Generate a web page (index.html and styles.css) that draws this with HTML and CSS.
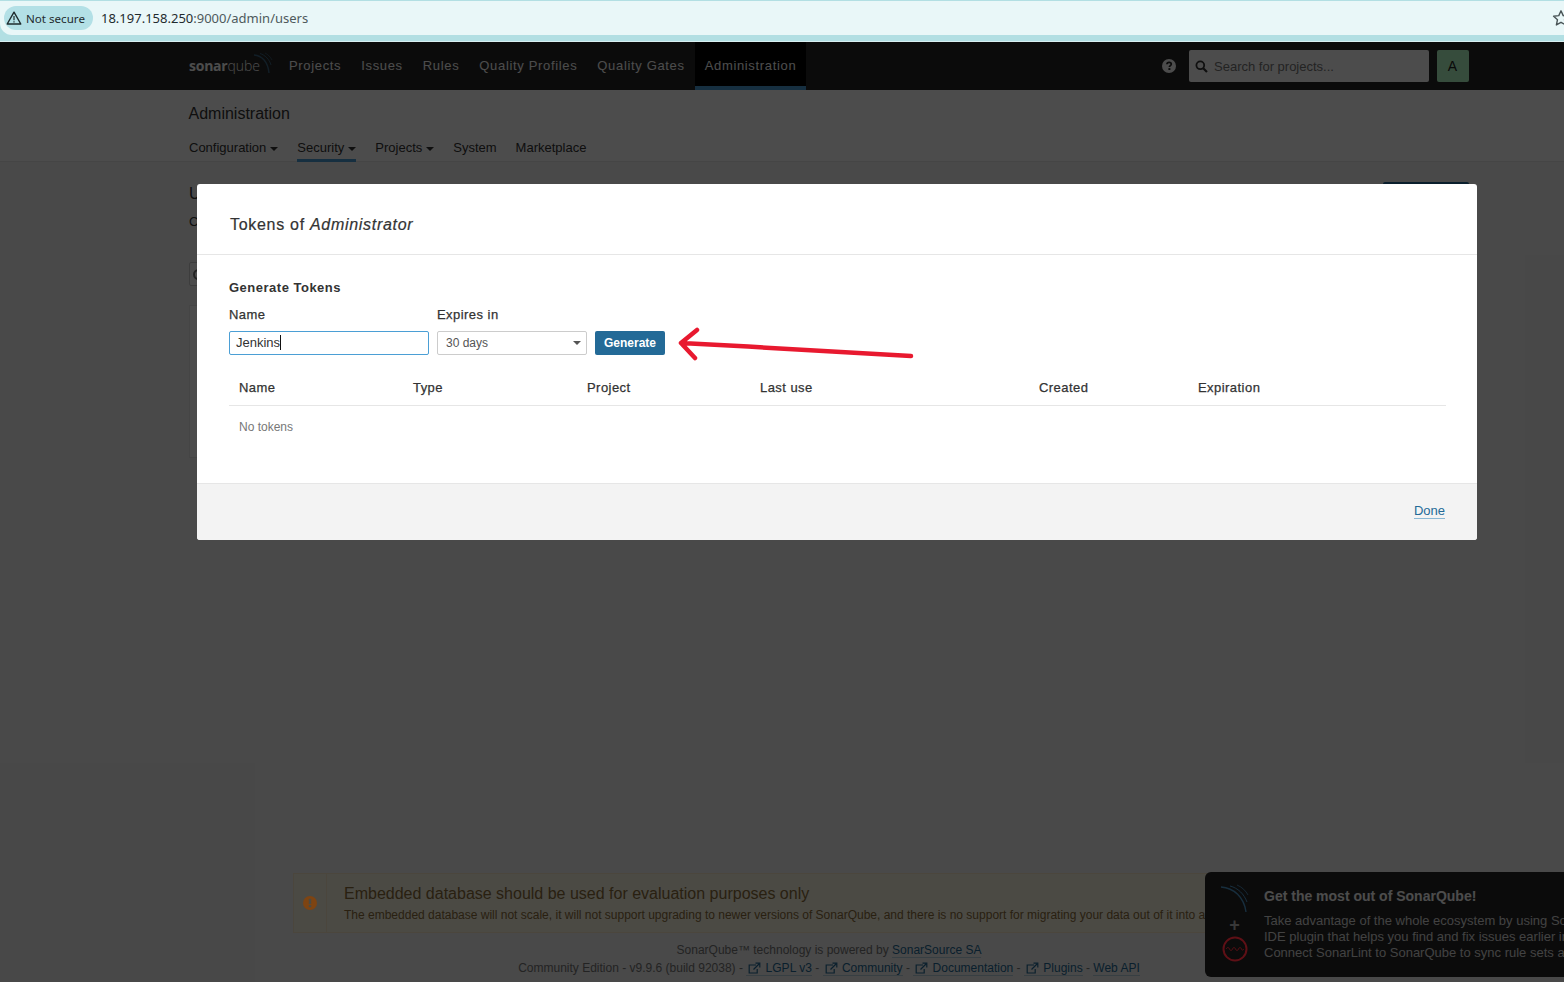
FILE: index.html
```html
<!DOCTYPE html>
<html lang="en">
<head>
<meta charset="utf-8">
<title>Administration - SonarQube</title>
<link rel="stylesheet" href="styles.css">
</head>
<body>
<div class="chrome">
  <div class="omnibox">
    <div class="badge">
      <svg class="warn-tri" width="16" height="14" viewBox="0 0 16 14"><path d="M8 1.2 14.8 13H1.2Z" fill="none" stroke="#1f2b2e" stroke-width="1.4" stroke-linejoin="round"/><path d="M8 5v4.2M8 10.2v1.3" stroke="#1f2b2e" stroke-width="1.2"/></svg>
      <span>Not secure</span>
    </div>
    <div class="url"><span class="url-host">18.197.158.250</span>:9000/admin/users</div>
    <svg class="star" width="18" height="18" viewBox="0 0 18 18"><path d="M9 1.8 11.2 6.6 16.4 7.2 12.5 10.7 13.6 15.9 9 13.3 4.4 15.9 5.5 10.7 1.6 7.2 6.8 6.6Z" fill="none" stroke="#4a5557" stroke-width="1.4" stroke-linejoin="round"/></svg>
  </div>
</div>

<div class="page">
  <div class="overlay"></div>

  <header class="topbar">
    <div class="topbar-inner">
      <div class="logo">
        <span class="logo-sonar">sonar</span><span class="logo-qube">qube</span>
        <svg class="logo-arcs" width="20" height="22" viewBox="0 0 20 22"><path d="M1 3C9 3.500 15 10 16 21" fill="none" stroke="#4f9bd0" stroke-opacity=".55" stroke-width="1.4"/><path d="M7 1.500C12 3 16.500 7.500 18 13" fill="none" stroke="#4f9bd0" stroke-opacity=".5" stroke-width="1"/><path d="M12 1C15 2.500 17.500 5 19 8" fill="none" stroke="#4f9bd0" stroke-opacity=".45" stroke-width=".8"/></svg>
      </div>
      <nav class="mainnav">
        <a class="mainnav-item">Projects</a>
        <a class="mainnav-item">Issues</a>
        <a class="mainnav-item">Rules</a>
        <a class="mainnav-item">Quality Profiles</a>
        <a class="mainnav-item">Quality Gates</a>
        <a class="mainnav-item is-active">Administration</a>
      </nav>
      <div class="topbar-right">
        <svg class="help" width="14" height="14" viewBox="0 0 14 14"><circle cx="7" cy="7" r="7" fill="#fff"/><path d="M4.900 5.300C5 4 6 3.300 7.100 3.300 8.400 3.300 9.300 4.100 9.300 5.100 9.300 6.600 7.400 6.600 7.400 8" fill="none" stroke="#262626" stroke-width="1.7"/><rect x="6.400" y="9.100" width="2" height="1.900" fill="#262626"/></svg>
        <div class="search">
          <svg width="13" height="13" viewBox="0 0 13 13"><circle cx="5.300" cy="5.300" r="3.900" fill="none" stroke="#333" stroke-width="1.8"/><path d="M8.200 8.200 12 12" stroke="#333" stroke-width="2.2"/></svg>
          <span>Search for projects...</span>
        </div>
        <div class="avatar">A</div>
      </div>
    </div>
  </header>

  <section class="subhead">
    <h1 class="subhead-title">Administration</h1>
    <nav class="subnav">
      <a class="subnav-item">Configuration<i class="caret"></i></a>
      <a class="subnav-item is-active">Security<i class="caret"></i></a>
      <a class="subnav-item">Projects<i class="caret"></i></a>
      <a class="subnav-item">System</a>
      <a class="subnav-item">Marketplace</a>
    </nav>
  </section>

  <main class="content">
    <div class="content-head">
      <div>
        <h2 class="content-title">Users</h2>
        <p class="content-desc">Create and administer individual users.</p>
      </div>
      <button class="create-user">Create User</button>
    </div>
    <div class="user-search"><i class="user-search-icon"></i></div>
    <div class="user-card"></div>
  </main>

  <section class="warning">
    <div class="warning-icon">
      <svg class="warning-glyph" width="14" height="14" viewBox="0 0 14 14"><circle cx="7" cy="7" r="7" fill="#7e4412"/><rect x="5.800" y="2.800" width="2.400" height="5.200" fill="#4b4a42"/><rect x="5.800" y="9" width="2.400" height="2.200" fill="#4b4a42"/></svg>
    </div>
    <div class="warning-body">
      <div class="warning-title">Embedded database should be used for evaluation purposes only</div>
      <div class="warning-text">The embedded database will not scale, it will not support upgrading to newer versions of SonarQube, and there is no support for migrating your data out of it into a different database engine.</div>
    </div>
  </section>

  <footer class="footer">
    <div>SonarQube™ technology is powered by <a class="flink">SonarSource SA</a></div>
    <div>Community Edition - v9.9.6 (build 92038) -
      <a class="flink"><svg class="ext" width="13" height="12" viewBox="0 0 13 12"><path d="M8 3H1.200v8h8V7M5.500 7.500 11 2M7.500 1.200h4.300v4.300" fill="none" stroke="#236a97" stroke-width="1.2"/></svg> LGPL v3</a> -
      <a class="flink"><svg class="ext" width="13" height="12" viewBox="0 0 13 12"><path d="M8 3H1.200v8h8V7M5.500 7.500 11 2M7.500 1.200h4.300v4.300" fill="none" stroke="#236a97" stroke-width="1.2"/></svg> Community</a> -
      <a class="flink"><svg class="ext" width="13" height="12" viewBox="0 0 13 12"><path d="M8 3H1.200v8h8V7M5.500 7.500 11 2M7.500 1.200h4.300v4.300" fill="none" stroke="#236a97" stroke-width="1.2"/></svg> Documentation</a> -
      <a class="flink"><svg class="ext" width="13" height="12" viewBox="0 0 13 12"><path d="M8 3H1.200v8h8V7M5.500 7.500 11 2M7.500 1.200h4.300v4.300" fill="none" stroke="#236a97" stroke-width="1.2"/></svg> Plugins</a> -
      <a class="flink">Web API</a></div>
  </footer>

  <aside class="toast">
    <div class="toast-icons">
      <svg width="30" height="30" viewBox="0 0 30 30"><path d="M1 3C14 4 24 13 26 28" fill="none" stroke="#4f9bd0" stroke-width="1.4"/><path d="M10 2C18 4 24 10 27 18" fill="none" stroke="#4f9bd0" stroke-width="1"/><path d="M17 1C22 3 26 7 28 11" fill="none" stroke="#4f9bd0" stroke-width=".8"/></svg>
      <span class="toast-plus">+</span>
      <svg class="toast-lint" width="26" height="26" viewBox="0 0 26 26"><circle cx="13" cy="13" r="11.500" fill="none" stroke="#5e1016" stroke-width="2"/><path d="M4 13c1.500-2 2.500-2 3.500 0s2 2 3 0 2-2 3 0 2 2 3 0 2-2 3 0 1.500 1 2.500 0" fill="none" stroke="#5e1016" stroke-width="1"/></svg>
    </div>
    <div class="toast-body">
      <div class="toast-title">Get the most out of SonarQube!</div>
      <div class="toast-line">Take advantage of the whole ecosystem by using SonarLint, a free</div>
      <div class="toast-line">IDE plugin that helps you find and fix issues earlier in your workflow.</div>
      <div class="toast-line">Connect SonarLint to SonarQube to sync rule sets and settings.</div>
    </div>
  </aside>

  <div class="modal" role="dialog">
    <div class="modal-head">Tokens of <em>Administrator</em></div>
    <div class="modal-body">
      <h3 class="gen-title">Generate Tokens</h3>
      <div class="gen-form">
        <div class="field">
          <label class="field-label">Name</label>
          <div class="name-input">Jenkins<i class="cursor"></i></div>
        </div>
        <div class="field">
          <label class="field-label">Expires in</label>
          <div class="select">30 days<i class="select-caret"></i></div>
        </div>
        <button class="generate">Generate</button>
      </div>
      <div class="tokens-head">
        <span>Name</span><span>Type</span><span>Project</span><span>Last use</span><span>Created</span><span>Expiration</span>
      </div>
      <div class="tokens-empty">No tokens</div>
    </div>
    <div class="modal-foot"><a class="done">Done</a></div>
    <svg class="arrow" width="250" height="40" viewBox="0 0 250 40"><path d="M234 29C150 24 80 20 4 16M20 3 4 16 18 31" fill="none" stroke="#e8192f" stroke-width="4.500" stroke-linecap="round" stroke-linejoin="round"/></svg>
  </div>
</div>
</body>
</html>
```
FILE: styles.css
```css
* { box-sizing: border-box; }
html, body { margin: 0; height: 100%; overflow: hidden; }
body { width: 1564px; height: 982px; font-family: "Liberation Sans", Arial, sans-serif; font-size: 12px; color: #333; background: #f3f3f3; display: flex; flex-direction: column; }

/* browser chrome */
.chrome { height: 42px; flex: none; background: #b2dfe3; padding-top: 1px; border-bottom: 1px solid #d8eff1; }
.omnibox { height: 34px; background: #e9f7f8; border-radius: 0 0 0 12px; display: flex; align-items: center; padding: 0 0 0 4px; font-family: "Noto Sans", sans-serif; position: relative; }
.badge { height: 24px; width: 89px; background: #b3e0e6; border-radius: 12px; display: flex; align-items: center; gap: 4px; padding-left: 2px; font-size: 11.6px; color: #1f2b2e; white-space: nowrap; }
.url { margin-left: 8px; font-size: 13px; color: #4e5a5c; }
.url-host { color: #1f2b2e; }
.star { margin-left: auto; margin-right: -6px; flex: none; }

/* page */
.page { position: relative; flex: 1; overflow: hidden; display: flex; flex-direction: column; min-height: 0; }
.overlay { position: absolute; inset: 0; background: rgba(0,0,0,.7); z-index: 1; }

.topbar { height: 48px; flex: none; background: #262626; padding-left: 189px; }
.topbar-inner { width: 1280px; height: 48px; display: flex; align-items: stretch; }
.logo { position: relative; width: 90px; display: flex; align-items: center; padding-bottom: 2px; font-family: "Open Sans", sans-serif; font-size: 14px; color: #fff; }
.logo-sonar { font-weight: 700; letter-spacing: -.25px; }
.logo-qube { font-weight: 300; }
.logo-arcs { position: absolute; left: 64px; top: 10px; }
.mainnav { display: flex; }
.mainnav-item { padding: 0 10px; line-height: 48px; font-size: 13px; letter-spacing: .66px; color: #fff; white-space: nowrap; }
.mainnav-item.is-active { background: #000; border-bottom: 4px solid #4b9fd5; height: 48px; }
.topbar-right { margin-left: auto; display: flex; align-items: center; }
.help { margin-right: 13px; }
.search { width: 240px; height: 32px; background: #fff; border-radius: 2px; display: flex; align-items: center; gap: 6px; padding-left: 6px; font-size: 13px; color: #777; }
.avatar { width: 32px; height: 32px; margin-left: 8px; background: #b6ffc8; border-radius: 2px; display: flex; align-items: center; justify-content: center; font-size: 14px; color: #222; padding-right: 1px; }

.subhead { height: 72px; flex: none; background: #fff; border-bottom: 1px solid #e6e6e6; padding: 14px 0 0 189px; }
.subhead-title { margin: 0 0 0 -.5px; font-size: 16px; font-weight: 400; line-height: 20px; color: #333; }
.subnav { display: flex; gap: 19px; margin-top: 15px; height: 23px; font-size: 13px; color: #333; }
.subnav-item { height: 23px; line-height: 18px; white-space: nowrap; }
.subnav-item.is-active { border-bottom: 3px solid #4b9fd5; }
.caret { display: inline-block; border: 4px solid transparent; border-top-color: currentColor; border-bottom: 0; margin-left: 4px; vertical-align: middle; }

.content { flex: 1; padding: 22px 95px 0 189px; min-height: 0; }
.content-head { display: flex; justify-content: space-between; align-items: flex-start; height: 78px; }
.content-title { margin: 0; font-size: 16px; font-weight: 400; line-height: 20px; }
.content-desc { margin: 9px 0 0; font-size: 13px; line-height: 18px; }
.create-user { width: 86px; height: 24px; margin-top: -2px; background: #236a97; color: #fff; border: 0; border-radius: 2px; font: 700 12px "Liberation Sans", sans-serif; }
.user-search { width: 250px; height: 24px; background: #fff; border: 1px solid #ccc; border-radius: 2px; padding: 6px 0 0 3px; }
.user-search-icon { display: block; width: 11px; height: 11px; border: 2px solid #777; border-radius: 50%; }
.user-card { margin-top: 19px; height: 153px; background: #fff; border: 1px solid #e6e6e6; }

.warning { flex: none; width: 1072px; height: 60px; margin-left: 293px; background: #fcf8e3; border: 1px solid #faebcc; display: flex; }
.warning-icon { width: 33px; flex: none; border-right: 1px solid #faebcc; display: flex; align-items: center; justify-content: center; }
.warning-glyph { position: relative; z-index: 2; }
.warning-body { padding: 10px 0 0 17px; color: #8a6d3b; white-space: nowrap; overflow: hidden; }
.warning-title { font-size: 16px; line-height: 20px; }
.warning-text { font-size: 12px; line-height: 16px; margin-top: 3px; }

.footer { flex: none; height: 49px; padding: 8px 0 0; text-align: center; font-size: 12px; line-height: 18px; color: #777; width: 1658px; }
.flink { color: #236a97; border-bottom: 1px solid #b9d2e2; }
.ext { vertical-align: -2px; margin: 0 1px 0 2px; }

.toast { position: absolute; left: 1205px; top: 830px; width: 420px; height: 105px; background: #262626; border-radius: 6px; display: flex; color: #fff; overflow: hidden; white-space: nowrap; }
.toast-icons { width: 59px; flex: none; display: flex; flex-direction: column; align-items: center; padding-top: 12px; }
.toast-plus { font-size: 18px; line-height: 20px; margin-top: 1px; color: #bbb; font-weight: 700; }
.toast-lint { position: relative; z-index: 2; margin-top: 1px; margin-left: 1px; }
.toast-body { padding-top: 15px; }
.toast-title { font-size: 14px; font-weight: 700; line-height: 18px; }
.toast-line { font-size: 13px; line-height: 16px; color: #ddd; }
.toast-title + .toast-line { margin-top: 8px; }

/* modal */
.modal { position: absolute; z-index: 3; left: 197px; top: 142px; width: 1280px; height: 356px; background: #fff; border-radius: 3px; display: flex; flex-direction: column; }
.modal-head { height: 71px; flex: none; border-bottom: 1px solid #e6e6e6; padding: 31px 0 0 33px; font-size: 16px; line-height: 20px; color: #333; letter-spacing: .7px; -webkit-text-stroke: .2px #333; }
.modal-body { flex: 1; padding: 24px 31px 0 32px; }
.gen-title { margin: 0; font-size: 13px; font-weight: 700; line-height: 18px; color: #333; letter-spacing: .5px; }
.gen-form { display: flex; align-items: flex-end; gap: 8px; margin-top: 9px; }
.field { display: flex; flex-direction: column; }
.field-label { font-size: 13px; line-height: 18px; margin-bottom: 7px; letter-spacing: .45px; -webkit-text-stroke: .25px #333; }
.name-input { width: 200px; height: 24px; border: 1px solid #4b9fd5; border-radius: 2px; padding: 0 0 2px 6px; font-size: 13px; line-height: 21px; color: #333; display: flex; align-items: center; }
.cursor { width: 1px; height: 15px; background: #111; margin-top: 1px; }
.select { position: relative; width: 150px; height: 24px; border: 1px solid #ccc; border-radius: 2px; padding-left: 8px; font-size: 12px; line-height: 22px; color: #555; }
.select-caret { position: absolute; right: 5px; top: 9px; border: 4px solid transparent; border-top-color: #555; border-bottom: 0; }
.generate { width: 70px; height: 24px; background: #236a97; color: #fff; border: 0; border-radius: 2px; font: 700 12px "Liberation Sans", sans-serif; padding: 0; }
.tokens-head { display: grid; grid-template-columns: 174px 174px 173px 279px 159px 1fr; height: 37px; margin-top: 14px; padding: 0 0 0 10px; border-bottom: 1px solid #e6e6e6; font-size: 13px; line-height: 38px; letter-spacing: .45px; -webkit-text-stroke: .25px #333; color: #333; }
.tokens-empty { padding: 12px 0 0 10px; font-size: 12px; line-height: 18px; color: #777; }
.modal-foot { height: 57px; flex: none; background: #f3f3f3; border-top: 1px solid #e6e6e6; border-radius: 0 0 3px 3px; padding: 18px 32px 0 0; text-align: right; font-size: 13px; line-height: 18px; }
.done { color: #236a97; border-bottom: 1px solid #8ab8d4; }
.arrow { position: absolute; left: 480px; top: 143px; }
```
